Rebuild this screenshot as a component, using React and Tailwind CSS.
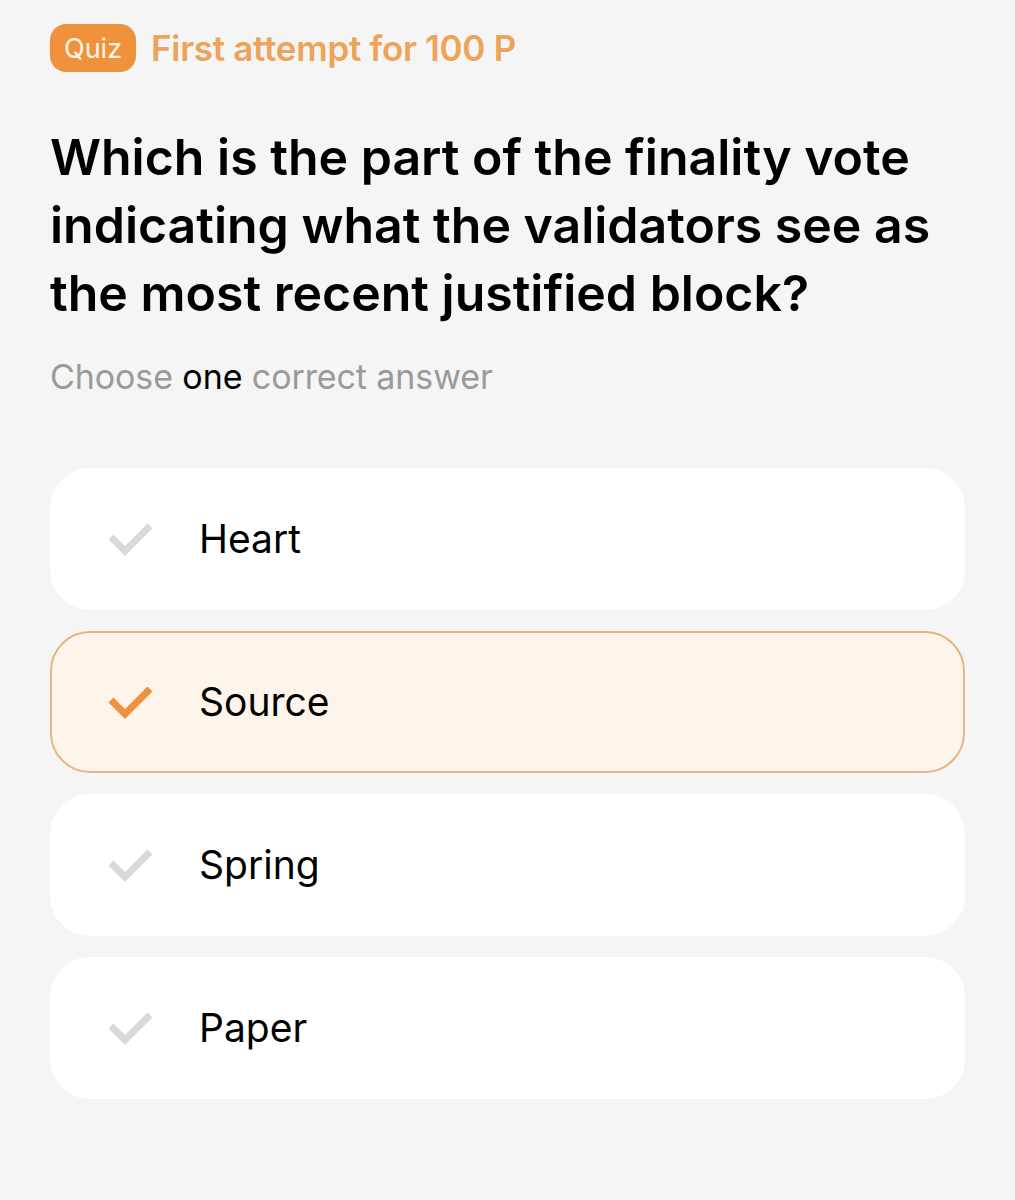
import React from "react";

const options = [
  { label: "Heart", selected: false },
  { label: "Source", selected: true },
  { label: "Spring", selected: false },
  { label: "Paper", selected: false },
];

function Check({ active }) {
  return (
    <svg width="46" height="36" viewBox="0 0 46 36" fill="none">
      <polyline
        points="3,16 17,30 42,5"
        stroke={active ? "#ee913f" : "#d9d9d9"}
        strokeWidth="7"
        strokeLinecap="butt"
        strokeLinejoin="miter"
      />
    </svg>
  );
}

function Option({ label, selected }) {
  return (
    <div
      className={
        selected
          ? "flex h-[142px] items-center rounded-[40px] border-2 border-[#e8b57f] bg-[#fdf4eb] pl-[56px]"
          : "flex h-[142px] items-center rounded-[40px] border-2 border-white bg-white pl-[56px]"
      }
    >
      <Check active={selected} />
      <span className="ml-[45px] text-[39px] text-black">{label}</span>
    </div>
  );
}

export default function App() {
  return (
    <div className="min-h-[1200px] bg-[#f5f5f5] px-[50px] pt-[24px] font-['Inter',sans-serif]">
      {/* header */}
      <div className="flex h-[48px] items-center gap-[15px]">
        <span className="flex h-[48px] items-center rounded-[16px] bg-[#f0913c] px-[14px] text-[27px] leading-none text-[#fff6ea]">
          Quiz
        </span>
        <span className="text-[35px] font-semibold leading-none tracking-[-0.3px] text-[#eea35b]">
          First attempt for 100 P
        </span>
      </div>

      <h1 className="mt-[51px] text-[50px] font-semibold leading-[68px] text-black">
        Which is the part of the finality vote indicating what the validators see as the most recent justified block?
      </h1>

      <p className="mt-[24px] text-[34px] tracking-[-0.1px] text-[#9a9a9a]">
        Choose <span className="text-black">one</span> correct answer
      </p>

      <div className="mt-[66px] flex flex-col gap-[21px]">
        {options.map((o) => (
          <Option key={o.label} {...o} />
        ))}
      </div>
    </div>
  );
}
